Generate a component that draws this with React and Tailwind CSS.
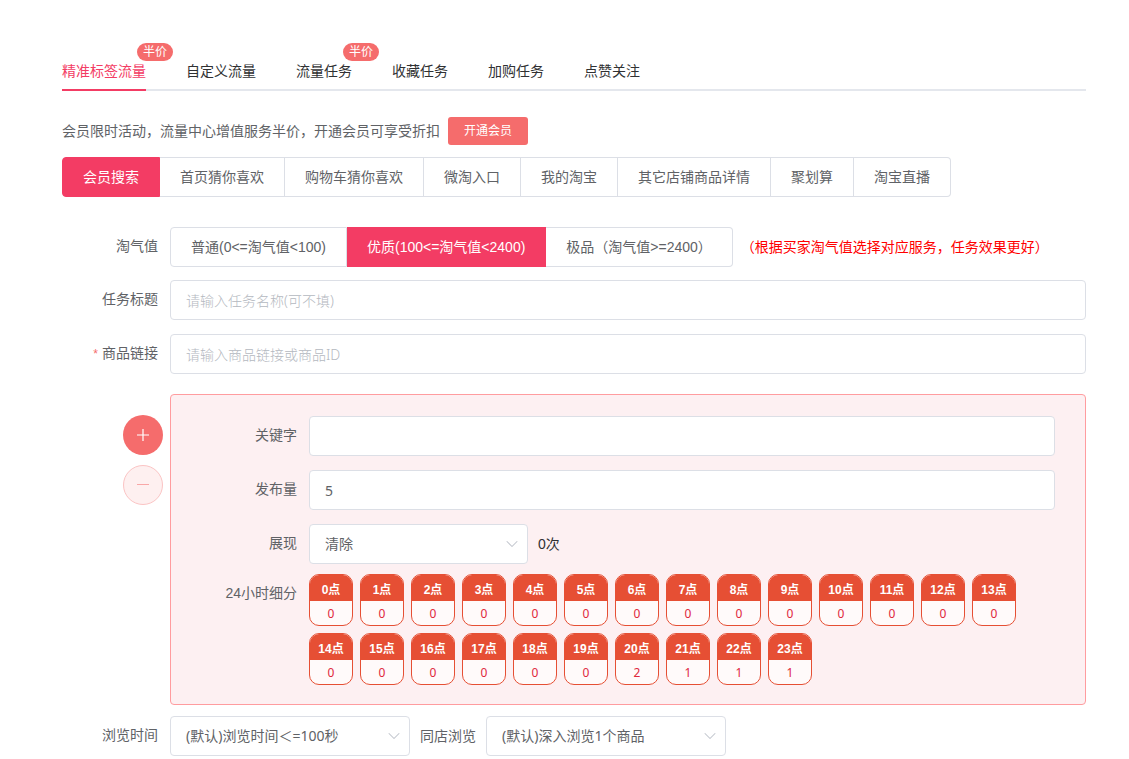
import React, { useState } from 'react';
import { ChevronDown } from 'lucide-react';

const tabs = [
  { label: '精准标签流量', badge: '半价' },
  { label: '自定义流量' },
  { label: '流量任务', badge: '半价' },
  { label: '收藏任务' },
  { label: '加购任务' },
  { label: '点赞关注' },
];

const channels = ['会员搜索', '首页猜你喜欢', '购物车猜你喜欢', '微淘入口', '我的淘宝', '其它店铺商品详情', '聚划算', '淘宝直播'];

const levels = ['普通(0<=淘气值<100)', '优质(100<=淘气值<2400)', '极品（淘气值>=2400）'];

const defaultHours = Array.from({ length: 24 }, (_, i) => {
  if (i === 20) return 2;
  return i > 20 ? 1 : 0;
});

const inputClass = "h-10 w-full min-w-0 rounded border border-[#dcdfe6] bg-white px-[15px] font-[family-name:'Noto_Sans','Noto_Sans_CJK_SC',sans-serif] text-sm text-[#606266] outline-none placeholder:font-light placeholder:text-[#b4b8c0] focus:border-[#f33c64]";

const RadioGroup = ({ name, label, options, value, onChange }) => (
  <div role="radiogroup" aria-label={label} className="flex">
    {options.map((item) => (
      <label
        key={item}
        className={`relative flex h-10 cursor-pointer items-center border-y border-r px-5 text-sm whitespace-nowrap first:rounded-l first:border-l last:rounded-r ${
          item === value ? 'border-[#f33c64] bg-[#f33c64] text-white' : 'border-[#dcdfe6] bg-white text-[#606266]'
        }`}
      >
        <input
          type="radio"
          name={name}
          className="sr-only"
          checked={item === value}
          onChange={() => onChange(item)}
        />
        {item}
      </label>
    ))}
  </div>
);

const FormRow = ({ id, label, required, labelWidth = 'w-[108px]', children }) => (
  <div className="flex items-start">
    <label htmlFor={id} className={`${labelWidth} shrink-0 pr-3 text-right leading-[38px] whitespace-nowrap`}>
      {required && <span className="mr-1 text-xs text-[#f56c6c]">*</span>}
      {label}
    </label>
    <div className="flex min-w-0 flex-1 items-center">{children}</div>
  </div>
);

const Select = ({ id, options, width }) => (
  <div className={`relative ${width}`}>
    <select id={id} className={`${inputClass} appearance-none pr-8`}>
      {options.map((item) => (
        <option key={item}>{item}</option>
      ))}
    </select>
    <ChevronDown
      size={20}
      strokeWidth={1.25}
      className="pointer-events-none absolute top-2.5 right-1.5 text-[#c0c4cc]"
    />
  </div>
);

const HourCard = ({ hour, value, onChange }) => (
  <div className="w-11 overflow-hidden rounded-[10px] border border-[#e64f34] bg-[#fffafa] text-center text-xs">
    <label htmlFor={`hour-${hour}`} className="block h-[26px] bg-[#e64f34] pt-[2px] leading-[26px] font-bold text-white">
      {hour}点
    </label>
    <input
      id={`hour-${hour}`}
      className="block h-6 w-full bg-transparent text-center font-[family-name:'Noto_Sans',sans-serif] text-[#e0283c] outline-none"
      value={value}
      onChange={(e) => onChange(hour, e.target.value)}
    />
  </div>
);

const App = () => {
  const [activeTab, setActiveTab] = useState(0);
  const [channel, setChannel] = useState(channels[0]);
  const [level, setLevel] = useState(levels[1]);
  const [amount, setAmount] = useState('5');
  const [hours, setHours] = useState(defaultHours);

  const handleHourChange = (hour, value) => {
    setHours(hours.map((item, i) => (i === hour ? value : item)));
  };

  return (
    <div className="bg-white pt-[51px] pr-[43px] pl-[62px] font-[family-name:'Liberation_Sans','Noto_Sans_CJK_SC',sans-serif] text-sm text-[#606266]">
      {/* Tabs */}
      <nav className="flex gap-10 border-b-2 border-[#e4e7ed]">
        {tabs.map((tab, index) => (
          <button
            key={tab.label}
            type="button"
            onClick={() => setActiveTab(index)}
            className={`relative -mb-[2px] h-10 cursor-pointer border-b-2 pt-0.5 whitespace-nowrap ${
              index === activeTab ? 'border-[#f33c64] text-[#f33c64]' : 'border-transparent text-[#303133]'
            }`}
          >
            {tab.label}
            {tab.badge && (
              <span className="absolute -top-2 left-full -ml-[9px] h-[18px] rounded-full bg-[#f56c6c] px-1.5 text-xs leading-[18px] text-white">
                {tab.badge}
              </span>
            )}
          </button>
        ))}
      </nav>

      {/* Promo */}
      <div className="mt-[26px] flex items-center gap-2">
        <span>会员限时活动，流量中心增值服务半价，开通会员可享受折扣</span>
        <button type="button" className="h-7 cursor-pointer rounded-[3px] bg-[#f56c6c] px-4 text-xs text-white">
          开通会员
        </button>
      </div>

      <div className="mt-3">
        <RadioGroup name="channel" label="流量渠道" options={channels} value={channel} onChange={setChannel} />
      </div>

      <form className="mt-[30px]" onSubmit={(e) => e.preventDefault()}>
        <FormRow label="淘气值">
          <RadioGroup name="level" label="淘气值" options={levels} value={level} onChange={setLevel} />
          <span className="ml-2 whitespace-nowrap text-[#ff0000]">（根据买家淘气值选择对应服务，任务效果更好）</span>
        </FormRow>
        <div className="mt-[13px] flex flex-col gap-[14px]">
          <FormRow id="title" label="任务标题">
            <input id="title" className={inputClass} placeholder="请输入任务名称(可不填)" />
          </FormRow>
          <FormRow id="link" label="商品链接" required>
            <input id="link" className={inputClass} placeholder="请输入商品链接或商品ID" />
          </FormRow>
        </div>

        {/* Keyword */}
        <div className="mt-5 flex">
          <div className="flex w-[108px] shrink-0 flex-col items-end gap-[10px] pt-[21px] pr-[7px]">
            <button
              type="button"
              aria-label="添加"
              className="flex size-10 cursor-pointer items-center justify-center rounded-full bg-[#f56c6c] text-white"
            >
              <svg width="14" height="14" viewBox="0 0 14 14" stroke="currentColor" strokeWidth="1.2">
                <path d="M1 7h12M7 1v12" />
              </svg>
            </button>
            <button
              type="button"
              aria-label="删除"
              disabled
              className="flex size-10 items-center justify-center rounded-full border border-[#fbc4c4] bg-[#fef0f0] text-[#f9a7a7]"
            >
              <svg width="14" height="14" viewBox="0 0 14 14" stroke="currentColor">
                <path d="M1 6.5h12" />
              </svg>
            </button>
          </div>
          <div className="min-w-0 flex-1 rounded border border-[#ff9c9f] bg-[#fdf0f2] pt-[21px] pr-[30px] pb-[19px]">
            <div className="flex flex-col gap-[14px]">
              <FormRow id="keyword" label="关键字" labelWidth="w-[138px]">
                <input id="keyword" className={inputClass} />
              </FormRow>
              <FormRow id="amount" label="发布量" labelWidth="w-[138px]">
                <input id="amount" className={inputClass} value={amount} onChange={(e) => setAmount(e.target.value)} />
              </FormRow>
              <FormRow id="display" label="展现" labelWidth="w-[138px]">
                <Select id="display" options={['清除']} width="w-[219px]" />
                <span className="ml-[10px] text-[#303133]">0次</span>
              </FormRow>
            </div>
            <div className="mt-[10px]">
              <FormRow label="24小时细分" labelWidth="w-[138px]">
                <div className="flex flex-wrap gap-[7px]">
                  {hours.map((value, hour) => (
                    <HourCard key={hour} hour={hour} value={value} onChange={handleHourChange} />
                  ))}
                </div>
              </FormRow>
            </div>
          </div>
        </div>

        {/* Browse */}
        <div className="mt-[11px] pb-[3px]">
          <FormRow id="time" label="浏览时间">
            <Select id="time" options={['(默认)浏览时间＜=100秒']} width="w-60" />
            <label htmlFor="depth" className="mx-[10px]">同店浏览</label>
            <Select id="depth" options={['(默认)深入浏览1个商品']} width="w-60" />
          </FormRow>
        </div>
      </form>
    </div>
  );
};

export default App;
